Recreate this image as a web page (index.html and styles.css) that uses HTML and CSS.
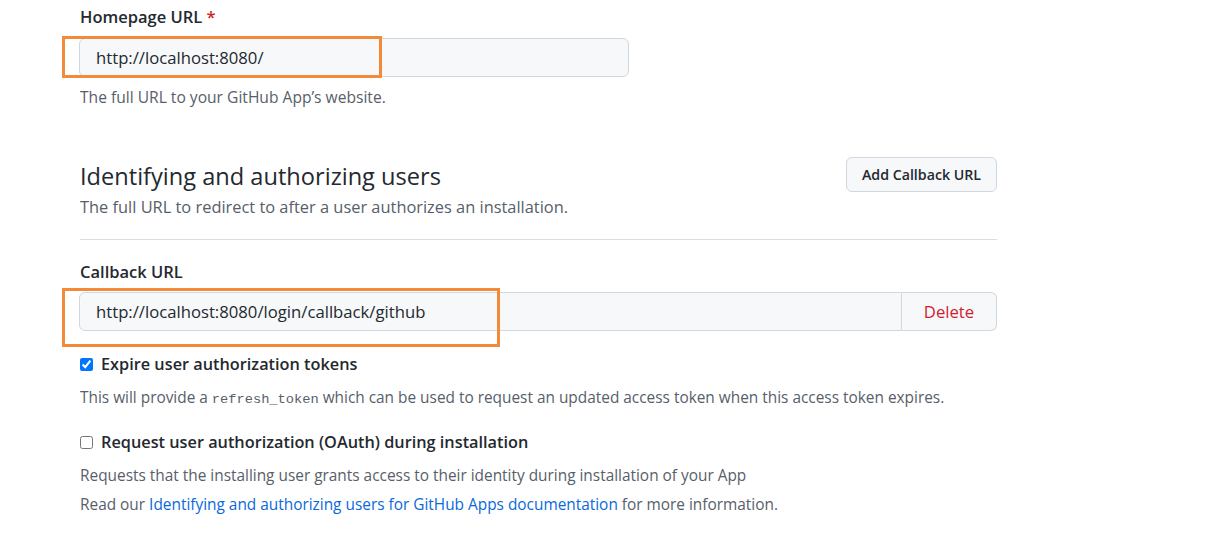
FILE: index.html
```html
<!DOCTYPE html>
<html lang="en">
<head>
<meta charset="utf-8">
<title>GitHub App settings</title>
<link rel="stylesheet" href="styles.css">
</head>
<body>
<div class="page">
  <div class="field field-home">
    <label class="label">Homepage URL <span class="req">*</span></label>
    <div class="input-wrap">
      <div class="input input-home">http://localhost:8080/</div>
      <div class="mark mark-home"></div>
    </div>
    <p class="note note-home">The full URL to your GitHub App’s website.</p>
  </div>

  <div class="subhead">
    <div class="subhead-text">
      <h2 class="subhead-title">Identifying and authorizing users</h2>
      <p class="subhead-desc">The full URL to redirect to after a user authorizes an installation.</p>
    </div>
    <button class="btn">Add Callback URL</button>
  </div>

  <div class="field field-callback">
    <label class="label">Callback URL</label>
    <div class="input-wrap">
      <div class="input-group">
        <div class="input input-cb">http://localhost:8080/login/callback/github</div>
        <button class="btn-delete">Delete</button>
      </div>
      <div class="mark mark-cb"></div>
    </div>
  </div>

  <div class="check check-expire">
    <label class="check-label"><input type="checkbox" checked> Expire user authorization tokens</label>
    <p class="note">This will provide a <code>refresh_token</code> which can be used to request an updated access token when this access token expires.</p>
  </div>

  <div class="check check-oauth">
    <label class="check-label"><input type="checkbox"> Request user authorization (OAuth) during installation</label>
    <p class="note">Requests that the installing user grants access to their identity during installation of your App</p>
    <p class="note note-read">Read our <a href="#">Identifying and authorizing users for GitHub Apps documentation</a> for more information.</p>
  </div>
</div>
</body>
</html>
```
FILE: styles.css
```css
* { box-sizing: border-box; }
html, body { margin: 0; background: #ffffff; }
body {
  font-family: "Open Sans", "Noto Sans", sans-serif;
  color: #24292f;
}
.page {
  padding: 7px 0 0 80px;
  width: 997px;
}
.label {
  display: block;
  font-size: 16.5px;
  font-weight: 600;
  line-height: 20px;
  height: 20px;
}
.req { color: #cf222e; }
.input-wrap { position: relative; }
.input {
  height: 39px;
  background: #f6f8fa;
  border: 1px solid #d0d7de;
  border-radius: 6px;
  padding: 0 16px;
  font-size: 16.7px;
  line-height: 37px;
  color: #24292f;
}
.field-home .input-wrap { margin-top: 11px; width: 549px; }
.input-home { margin-left: -1px; }
.mark {
  position: absolute;
  border: 3px solid #f38a3a;
  pointer-events: none;
}
.mark-home { left: -18px; top: -2px; width: 320px; height: 42px; }
.note {
  margin: 0;
  font-size: 15.4px;
  line-height: 20px;
  color: #57606a;
}
.note-home { margin-top: 10px; font-size: 15.6px; }

.subhead {
  display: flex;
  justify-content: space-between;
  align-items: flex-start;
  margin-top: 50px;
  padding-bottom: 20px;
  border-bottom: 1px solid #d8dee4;
}
.subhead-title {
  margin: 0;
  font-size: 23.6px;
  font-weight: 400;
  line-height: 38px;
}
.subhead-desc {
  margin: 0;
  font-size: 16.4px;
  line-height: 24px;
  color: #57606a;
}
.btn {
  height: 35px;
  width: 151px;
  padding: 0;
  background: #f6f8fa;
  border: 1px solid #d0d7de;
  border-radius: 6px;
  font-family: inherit;
  font-size: 14.2px;
  font-weight: 600;
  color: #24292f;
}
.field-callback { margin-top: 22px; }
.field-callback .input-wrap { margin-top: 10px; }
.input-group { display: flex; margin-left: -1px; }
.input-cb {
  flex: 1;
  border-radius: 6px 0 0 6px;
}
.btn-delete {
  width: 95px;
  height: 39px;
  background: #f6f8fa;
  border: 1px solid #d0d7de;
  border-left: none;
  border-radius: 0 6px 6px 0;
  font-family: inherit;
  font-size: 16.7px;
  font-weight: 500;
  color: #cf222e;
  padding: 0;
}
.mark-cb { left: -18px; top: -4px; width: 438px; height: 59px; }

.check-label {
  display: flex;
  align-items: center;
  gap: 8px;
  font-size: 16.3px;
  font-weight: 600;
  line-height: 24px;
}
.check-label input {
  margin: 0;
  width: 13px;
  height: 13px;
}
.check-expire { margin-top: 21px; }
.check-expire .note { margin-top: 12px; }
.check-oauth { margin-top: 20px; }
.check-oauth .note { margin-top: 12px; }
.check-oauth .note-read { margin-top: 9px; }
code {
  font-family: "Liberation Mono", "DejaVu Sans Mono", monospace;
  font-size: 13.7px;
  color: #57606a;
}
a { color: #0969da; text-decoration: none; }
```
